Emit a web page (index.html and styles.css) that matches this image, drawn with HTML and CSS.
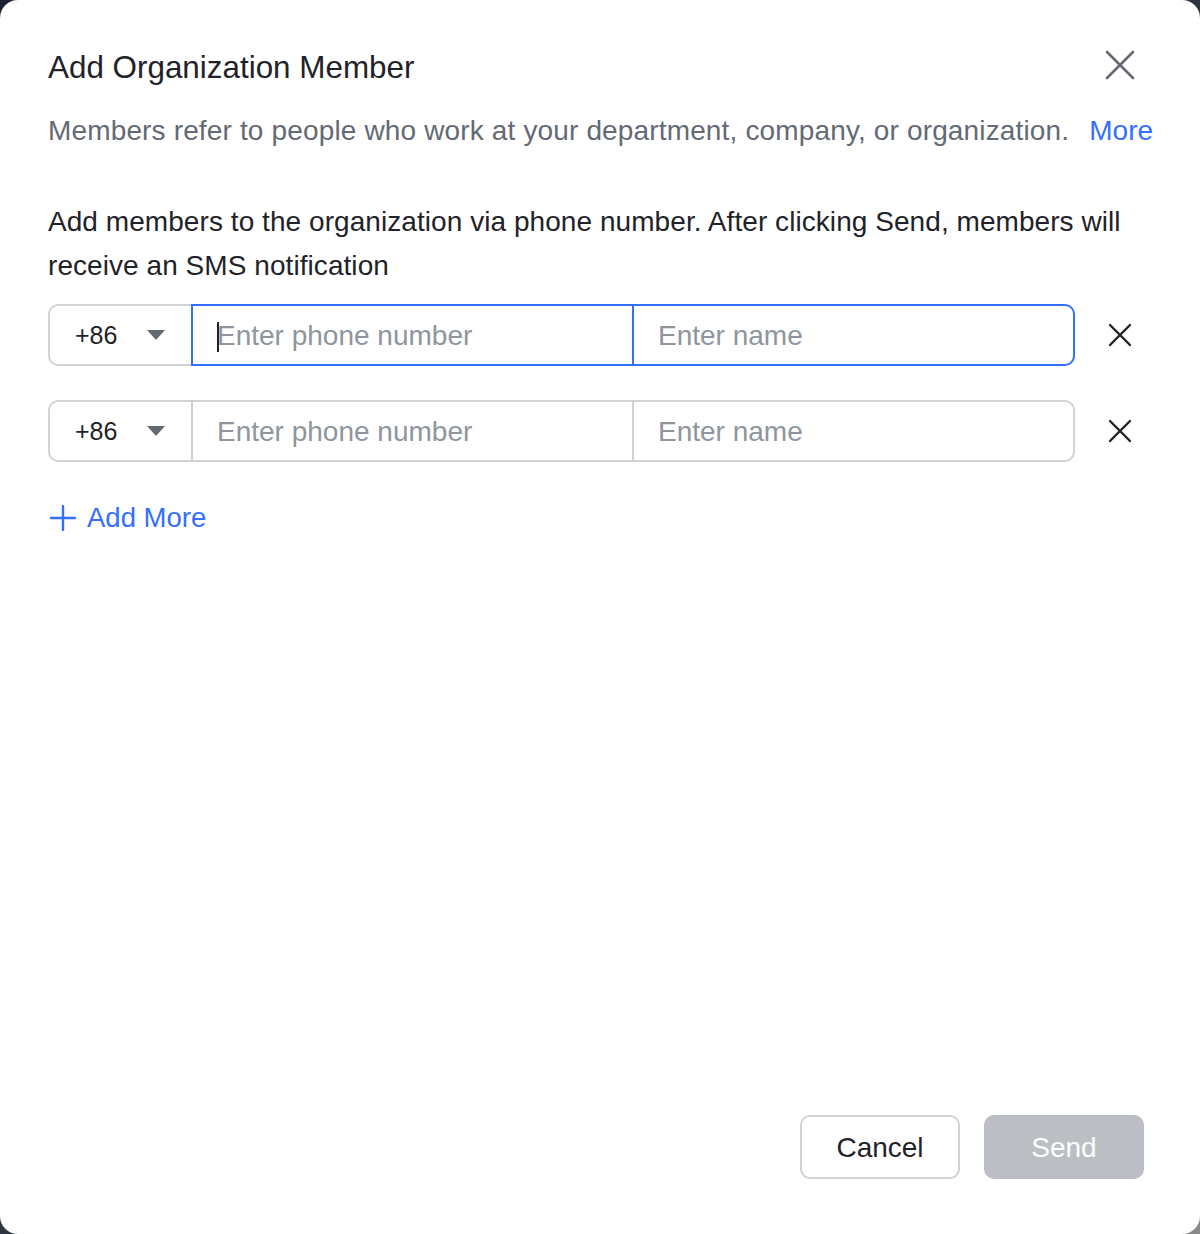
FILE: index.html
```html
<!DOCTYPE html>
<html lang="en">
<head>
<meta charset="utf-8">
<title>Add Organization Member</title>
<link rel="stylesheet" href="styles.css">
</head>
<body>
<div class="dialog">
  <div class="header">
    <h1 class="title">Add Organization Member</h1>
    <button class="close" aria-label="Close">
      <svg width="32" height="32" viewBox="0 0 32 32"><path d="M3 3L29 29M29 3L3 29" stroke="#646a73" stroke-width="2.6" stroke-linecap="round" fill="none"/></svg>
    </button>
  </div>
  <p class="desc"><span>Members refer to people who work at your department, company, or organization.</span><a class="more" href="#">More</a></p>
  <p class="intro">Add members to the organization via phone number. After clicking Send, members will receive an SMS notification</p>

  <div class="rows">
    <div class="row">
      <div class="group">
        <div class="select"><span class="code">+86</span><span class="caret"></span></div>
        <div class="fields focused">
          <div class="field phone"><span class="cursor"></span><span class="ph">Enter phone number</span></div>
          <div class="field name"><span class="ph">Enter name</span></div>
        </div>
      </div>
      <button class="remove" aria-label="Remove">
        <svg width="24" height="24" viewBox="0 0 24 24"><path d="M2 2L22 22M22 2L2 22" stroke="#1f2329" stroke-width="2.4" stroke-linecap="round" fill="none"/></svg>
      </button>
    </div>
    <div class="row">
      <div class="group">
        <div class="select"><span class="code">+86</span><span class="caret"></span></div>
        <div class="fields">
          <div class="field phone"><span class="ph">Enter phone number</span></div>
          <div class="field name"><span class="ph">Enter name</span></div>
        </div>
      </div>
      <button class="remove" aria-label="Remove">
        <svg width="24" height="24" viewBox="0 0 24 24"><path d="M2 2L22 22M22 2L2 22" stroke="#1f2329" stroke-width="2.4" stroke-linecap="round" fill="none"/></svg>
      </button>
    </div>
  </div>

  <a class="add-more" href="#">
    <svg width="26" height="26" viewBox="0 0 26 26"><path d="M13 1V25M1 13H25" stroke="#3370ff" stroke-width="2.4" stroke-linecap="round" fill="none"/></svg>
    <span>Add More</span>
  </a>

  <div class="footer">
    <button class="btn cancel">Cancel</button>
    <button class="btn send">Send</button>
  </div>
</div>
</body>
</html>
```

FILE: styles.css
```css
* { box-sizing: border-box; }
html, body {
  margin: 0;
  height: 100%;
}
body {
  background: linear-gradient(135deg, #1b2233 0%, #1b2233 40%, #8a8a8a 100%);
  font-family: "Liberation Sans", Arial, sans-serif;
  color: #1f2329;
}
.dialog {
  width: 1200px;
  height: 1234px;
  background: #fff;
  border-radius: 18px;
  padding: 0 48px;
  display: flex;
  flex-direction: column;
}
.header {
  margin-top: 48px;
  height: 40px;
  display: flex;
  align-items: center;
  justify-content: space-between;
}
.title {
  margin: 0;
  font-size: 31.4px;
  font-weight: 400;
  line-height: 40px;
  color: #1f2329;
}
.close {
  border: 0;
  background: none;
  padding: 0;
  width: 32px;
  height: 32px;
  margin-right: 16px;
  margin-top: -6px;
  display: flex;
}
.desc {
  margin: 23px 0 0;
  font-size: 28px;
  letter-spacing: 0.15px;
  line-height: 40px;
  color: #646a73;
  display: flex;
  justify-content: space-between;
  white-space: nowrap;
}
.more {
  color: #3370ff;
  text-decoration: none;
  margin-left: 20px;
  letter-spacing: 0;
}
.intro {
  margin: 49px 0 0;
  font-size: 28px;
  letter-spacing: 0.06px;
  line-height: 44px;
  color: #1f2329;
}
.rows {
  margin-top: 16px;
  display: flex;
  flex-direction: column;
  gap: 34px;
}
.row {
  display: flex;
  align-items: center;
  height: 62px;
}
.group {
  flex: 1;
  display: flex;
  height: 62px;
}
.select {
  width: 143px;
  border: 2px solid #d0d3d6;
  border-right: 0;
  border-radius: 10px 0 0 10px;
  display: flex;
  align-items: center;
  padding-left: 25px;
}
.code {
  font-size: 25px;
  color: #1f2329;
  width: 72px;
}
.caret {
  width: 0;
  height: 0;
  border-left: 9px solid transparent;
  border-right: 9px solid transparent;
  border-top: 10px solid #646a73;
}
.fields {
  flex: 1;
  display: flex;
  border: 2px solid #d0d3d6;
  border-radius: 0 10px 10px 0;
}
.fields.focused {
  border-color: #3370ff;
}
.field {
  flex: 1;
  display: flex;
  align-items: center;
  font-size: 28px;
  color: #8f959e;
  padding-left: 24px;
  padding-top: 2px;
  position: relative;
}
.field.name {
  border-left: 2px solid #d0d3d6;
}
.fields.focused .field.name {
  border-left-color: #3370ff;
}
.cursor {
  position: absolute;
  left: 24px;
  top: 16px;
  width: 2px;
  height: 30px;
  background: #1f2329;
}
.remove {
  border: 0;
  background: none;
  padding: 0;
  width: 24px;
  height: 24px;
  margin-left: 33px;
  margin-right: 20px;
  display: flex;
}
.add-more {
  margin-top: 36px;
  margin-left: 2px;
  display: flex;
  align-items: center;
  gap: 11px;
  color: #3370ff;
  text-decoration: none;
  font-size: 27.5px;
  line-height: 40px;
  align-self: flex-start;
}
.footer {
  margin-top: auto;
  margin-bottom: 55px;
  margin-right: 8px;
  display: flex;
  justify-content: flex-end;
  gap: 24px;
}
.btn {
  width: 160px;
  height: 64px;
  border-radius: 10px;
  font-family: inherit;
  font-size: 28px;
  padding-top: 2px;
}
.cancel {
  background: #fff;
  border: 2px solid #d0d3d6;
  color: #1f2329;
}
.send {
  background: #bbbfc4;
  border: 0;
  color: #fff;
}
```
